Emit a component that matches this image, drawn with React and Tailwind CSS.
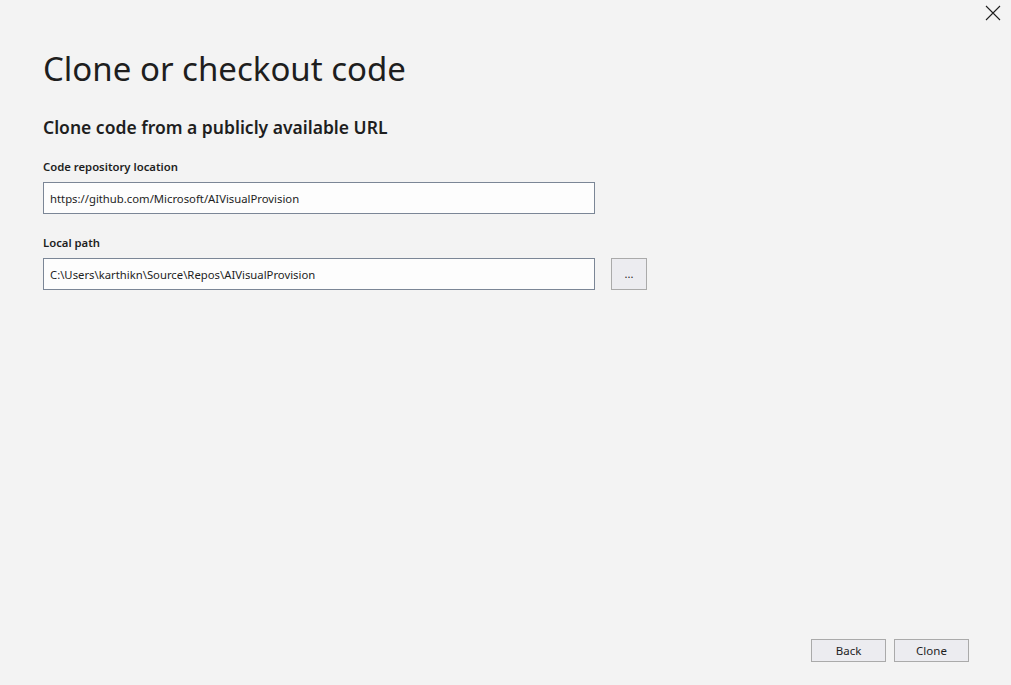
import React from 'react';

const font = { fontFamily: '"Noto Sans", "Open Sans", sans-serif' };

function Field({ label, value, children }) {
    return (
        <div className="flex flex-col">
            <label className="text-[11.3px] font-semibold text-[#1e1e1e] leading-[16px] mb-[7px]">{label}</label>
            <div className="flex items-center gap-4">
                <input
                    readOnly
                    value={value}
                    className="w-[552px] h-[32px] px-[6px] bg-[#fdfdfd] border border-[#7b8696] text-[11.3px] text-[#1e1e1e] outline-none"
                    style={font}
                />
                {children}
            </div>
        </div>
    );
}

export default function App() {
    return (
        <div className="w-[1011px] h-[685px] bg-[#f3f3f3] flex flex-col" style={font}>
            <div className="flex justify-end pt-[5px] pr-[10px]">
                <button className="w-[16px] h-[16px] text-[#1e1e1e]">
                    <svg viewBox="0 0 16 16" width="16" height="16" fill="none" stroke="currentColor" strokeWidth="1.1">
                        <path d="M1 1L15 15M15 1L1 15" />
                    </svg>
                </button>
            </div>

            <div className="flex flex-col pl-[43px]">
                <h1 className="text-[33px] font-normal text-[#1e1e1e] leading-[44px] mt-[26px]">Clone or checkout code</h1>
                <h2 className="text-[17.5px] font-semibold text-[#1e1e1e] leading-[24px] mt-[24px]">Clone code from a publicly available URL</h2>

                <div className="flex flex-col gap-[21px] mt-[20px]">
                    <Field label="Code repository location" value="https://github.com/Microsoft/AIVisualProvision" />
                    <Field label="Local path" value="C:\Users\karthikn\Source\Repos\AIVisualProvision">
                        <button className="w-[36px] h-[32px] bg-[#ececf0] border border-[#aaaaaa] text-[11px] text-[#1e1e1e] leading-none pb-[2px]">...</button>
                    </Field>
                </div>
            </div>

            <div className="flex-1" />

            <div className="flex justify-end gap-[8px] pr-[42px] pb-[23px]">
                <button className="w-[75px] h-[23px] bg-[#ececf0] border border-[#aaaaaa] text-[11.5px] text-[#1e1e1e]">Back</button>
                <button className="w-[75px] h-[23px] bg-[#ececf0] border border-[#aaaaaa] text-[11.5px] text-[#1e1e1e]">Clone</button>
            </div>
        </div>
    );
}
